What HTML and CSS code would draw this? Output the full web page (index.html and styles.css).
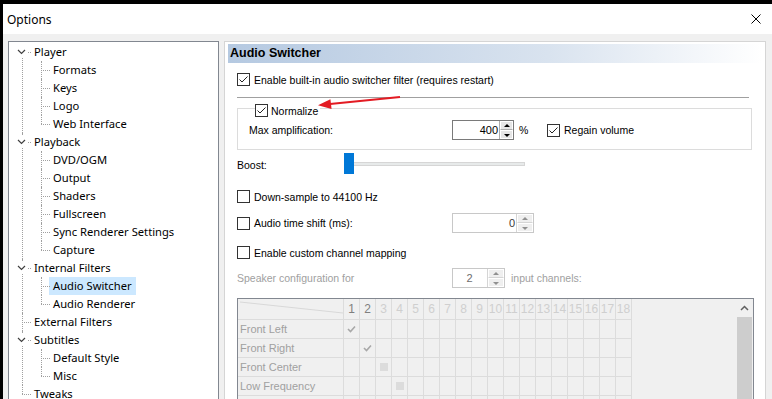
FILE: index.html
```html
<!DOCTYPE html>
<html>

<head>
  <meta charset="UTF-8">
  <title>Options</title>
  <link rel="stylesheet" href="styles.css">
</head>

<body>
  <div class="window">
    <div class="titlebar">
      <span class="title">Options</span>
      <svg class="close" width="10" height="10" viewBox="0 0 10 10"><path d="M0.5 0.5L9.5 9.5M9.5 0.5L0.5 9.5" stroke="#000" stroke-width="1" fill="none"/></svg>
    </div>

    <div class="content">
      <!-- left: page tree -->
      <ul class="tree">
        <li>
          <div class="row"><span class="exp"><svg width="9" height="6" viewBox="0 0 9 6"><path d="M1 1L4.5 4.5L8 1" stroke="#404040" stroke-width="1.2" fill="none"/></svg></span><span class="label">Player</span></div>
          <ul>
            <li><div class="row"><span class="label">Formats</span></div></li>
            <li><div class="row"><span class="label">Keys</span></div></li>
            <li><div class="row"><span class="label">Logo</span></div></li>
            <li><div class="row"><span class="label">Web Interface</span></div></li>
          </ul>
        </li>
        <li>
          <div class="row"><span class="exp"><svg width="9" height="6" viewBox="0 0 9 6"><path d="M1 1L4.5 4.5L8 1" stroke="#404040" stroke-width="1.2" fill="none"/></svg></span><span class="label">Playback</span></div>
          <ul>
            <li><div class="row"><span class="label">DVD/OGM</span></div></li>
            <li><div class="row"><span class="label">Output</span></div></li>
            <li><div class="row"><span class="label">Shaders</span></div></li>
            <li><div class="row"><span class="label">Fullscreen</span></div></li>
            <li><div class="row"><span class="label">Sync Renderer Settings</span></div></li>
            <li><div class="row"><span class="label">Capture</span></div></li>
          </ul>
        </li>
        <li>
          <div class="row"><span class="exp"><svg width="9" height="6" viewBox="0 0 9 6"><path d="M1 1L4.5 4.5L8 1" stroke="#404040" stroke-width="1.2" fill="none"/></svg></span><span class="label">Internal Filters</span></div>
          <ul>
            <li><div class="row"><span class="label selected">Audio Switcher</span></div></li>
            <li><div class="row"><span class="label">Audio Renderer</span></div></li>
          </ul>
        </li>
        <li>
          <div class="row"><span class="label">External Filters</span></div>
        </li>
        <li>
          <div class="row"><span class="exp"><svg width="9" height="6" viewBox="0 0 9 6"><path d="M1 1L4.5 4.5L8 1" stroke="#404040" stroke-width="1.2" fill="none"/></svg></span><span class="label">Subtitles</span></div>
          <ul>
            <li><div class="row"><span class="label">Default Style</span></div></li>
            <li><div class="row"><span class="label">Misc</span></div></li>
          </ul>
        </li>
        <li>
          <div class="row"><span class="label">Tweaks</span></div>
        </li>
      </ul>

      <!-- right: page -->
      <div class="page">
        <div class="page-header">Audio Switcher</div>
        <div class="page-body">
          <label class="check row-enable"><span class="box"><svg width="11" height="11" viewBox="0 0 11 11"><path d="M1.5 5.5L4 8L9.5 2.5" stroke="#222" stroke-width="1" fill="none"/></svg></span>Enable built-in audio switcher filter (requires restart)</label>

          <div class="separator"></div>

          <div class="group">
            <label class="check legend"><span class="box"><svg width="11" height="11" viewBox="0 0 11 11"><path d="M1.5 5.5L4 8L9.5 2.5" stroke="#222" stroke-width="1" fill="none"/></svg></span>Normalize</label>
            <div class="amp-row">
              <span class="amp-label">Max amplification:</span>
              <div class="spin spin-amp">
                <span class="val">400</span>
                <span class="btns"><span class="btn up"></span><span class="btn dn"></span></span>
              </div>
              <span class="pct">%</span>
              <label class="check"><span class="box"><svg width="11" height="11" viewBox="0 0 11 11"><path d="M1.5 5.5L4 8L9.5 2.5" stroke="#222" stroke-width="1" fill="none"/></svg></span>Regain volume</label>
            </div>
          </div>

          <div class="boost-row">
            <span class="boost-label">Boost:</span>
            <div class="slider">
              <div class="track"></div>
              <div class="thumb"></div>
            </div>
          </div>

          <label class="check row-down"><span class="box"></span>Down-sample to 44100 Hz</label>

          <div class="shift-row">
            <label class="check wide"><span class="box"></span>Audio time shift (ms):</label>
            <div class="spin spin-shift spin-off">
              <span class="val">0</span>
              <span class="btns"><span class="btn up"></span><span class="btn dn"></span></span>
            </div>
          </div>

          <label class="check row-map"><span class="box"></span>Enable custom channel mapping</label>

          <div class="speaker-row">
            <span class="muted wide">Speaker configuration for</span>
            <div class="spin spin-chan spin-off">
              <span class="val">2</span>
              <span class="btns"><span class="btn up"></span><span class="btn dn"></span></span>
            </div>
            <span class="muted channels">input channels:</span>
          </div>

          <div class="grid-box">
            <div class="matrix">
              <table>
                <tr class="head">
                  <th class="corner"><svg width="105" height="20" viewBox="0 0 105 20"><path d="M2 3L105 14" stroke="#d8d8d8" stroke-width="1" fill="none"/></svg></th>
                  <th class="on">1</th><th class="on">2</th><th>3</th><th>4</th><th>5</th><th>6</th><th>7</th><th>8</th><th>9</th><th>10</th><th>11</th><th>12</th><th>13</th><th>14</th><th>15</th><th>16</th><th>17</th><th>18</th>
                </tr>
                <tr>
                  <td class="name">Front Left</td>
                  <td><svg class="tick" width="9" height="8" viewBox="0 0 9 8"><path d="M1 4L3.5 6.5L8 1.5" stroke="#a8a8a8" stroke-width="1.6" fill="none"/></svg></td><td></td><td></td><td></td><td></td><td></td><td></td><td></td><td></td><td></td><td></td><td></td><td></td><td></td><td></td><td></td><td></td><td></td>
                </tr>
                <tr>
                  <td class="name">Front Right</td>
                  <td></td><td><svg class="tick" width="9" height="8" viewBox="0 0 9 8"><path d="M1 4L3.5 6.5L8 1.5" stroke="#a8a8a8" stroke-width="1.6" fill="none"/></svg></td><td></td><td></td><td></td><td></td><td></td><td></td><td></td><td></td><td></td><td></td><td></td><td></td><td></td><td></td><td></td><td></td>
                </tr>
                <tr>
                  <td class="name">Front Center</td>
                  <td></td><td></td><td><span class="square"></span></td><td></td><td></td><td></td><td></td><td></td><td></td><td></td><td></td><td></td><td></td><td></td><td></td><td></td><td></td><td></td>
                </tr>
                <tr>
                  <td class="name">Low Frequency</td>
                  <td></td><td></td><td></td><td><span class="square"></span></td><td></td><td></td><td></td><td></td><td></td><td></td><td></td><td></td><td></td><td></td><td></td><td></td><td></td><td></td>
                </tr>
                <tr>
                  <td class="name"></td>
                  <td></td><td></td><td></td><td></td><td></td><td></td><td></td><td></td><td></td><td></td><td></td><td></td><td></td><td></td><td></td><td></td><td></td><td></td>
                </tr>
              </table>
            </div>
            <div class="vscroll">
              <div class="arrow-up"><svg width="9" height="6" viewBox="0 0 9 6"><path d="M1 5L4.5 1.5L8 5" stroke="#606060" stroke-width="1.5" fill="none"/></svg></div>
              <div class="scroll-thumb"></div>
            </div>
          </div>
        </div>

        <!-- red annotation arrow -->
        <svg class="note-arrow" width="200" height="80" viewBox="0 0 200 80">
          <path d="M175 55L105 62" stroke="#e31b23" stroke-width="2.2" fill="none"/>
          <path d="M93 63.2L106.6 67L105.4 57.2Z" fill="#e31b23"/>
        </svg>
      </div>
    </div>
  </div>
</body>

</html>
```

FILE: styles.css
```css
html,
body {
  margin: 0;
  background: #000;
}

.window {
  margin: 4px 0 0 3px;
  height: 395px;
  overflow: hidden;
  background: #f0f0f0;
  font-family: "Liberation Sans", Arial, sans-serif;
  font-size: 10.5px;
  color: #000;
}

.titlebar {
  height: 30px;
  background: #fff;
  display: flex;
  align-items: center;
  justify-content: space-between;
  padding: 0 11px 0 4px;
}

.title {
  font-family: "Noto Sans", sans-serif;
  font-size: 12px;
}

.content {
  display: flex;
  gap: 5px;
  padding: 7px 6px 0 5px;
}

/* tree */

.tree,
.tree ul {
  list-style: none;
  margin: 0;
  padding: 0;
}

.tree {
  width: 209px;
  height: 370px;
  flex: none;
  background: #fff;
  border: 1px solid #828790;
  padding-top: 1px;
  font-family: "Noto Sans", sans-serif;
  font-size: 11.2px;
}

.tree li {
  position: relative;
}

.tree li::before {
  content: "";
  position: absolute;
  top: 0;
  bottom: 0;
  border-left: 1px dotted #a0a0a0;
}

.tree > li::before {
  left: 13px;
}

.tree ul li::before {
  left: 32px;
}

.tree > li:first-child::before {
  top: 9px;
}

.tree li:last-child::before {
  bottom: auto;
  height: 9px;
}

.row {
  position: relative;
  height: 18px;
  display: flex;
  align-items: center;
}

.row::before {
  content: "";
  position: absolute;
  top: 9px;
  width: 9px;
  border-top: 1px dotted #a0a0a0;
}

.tree > li > .row::before {
  left: 13px;
}

.tree ul .row::before {
  left: 32px;
}

.exp {
  position: absolute;
  left: 7px;
  top: 3px;
  width: 11px;
  height: 12px;
  background: #fff;
  display: flex;
  align-items: center;
  justify-content: center;
}

.label {
  height: 18px;
  line-height: 18px;
  padding: 0 4px;
  margin-left: 21px;
  white-space: nowrap;
}

.tree ul .label {
  margin-left: 40px;
}

.label.selected {
  background: #cce8ff;
}

/* page */

.page {
  position: relative;
  flex: 1;
  height: 370px;
  background: #fff;
  border: 1px solid #d5d5d5;
  padding: 2px 3px 0 3px;
}

.page-header {
  height: 19px;
  line-height: 19px;
  padding-left: 2px;
  font-weight: bold;
  font-size: 12.5px;
  background: linear-gradient(to right, #b5c9e1, #d9e3ef 60%, #fff);
}

.page-body {
  padding: 0 8px 0 9px;
}

.check {
  display: flex;
  align-items: center;
  height: 13px;
  white-space: nowrap;
}

.box {
  width: 11px;
  height: 11px;
  border: 1px solid #333;
  background: #fff;
  margin-right: 4px;
  flex: none;
}

.box svg {
  display: block;
}

.row-enable {
  margin-top: 10px;
}

.separator {
  margin: 11px 5px 0 0;
  height: 1px;
  background: #a0a0a0;
}

.group {
  position: relative;
  margin: 10px 2px 0 0;
  height: 40px;
  border: 1px solid #dcdcdc;
}

.legend {
  position: absolute;
  left: 17px;
  top: -5px;
  background: #fff;
  padding-right: 2px;
}

.legend .box {
  margin-right: 3px;
}

.amp-row {
  display: flex;
  align-items: center;
  height: 20px;
  margin-top: 11px;
  padding-left: 11px;
}

.amp-label {
  width: 203px;
}

.pct {
  width: 28px;
  margin-left: 5px;
}

/* spin edits */

.spin {
  display: flex;
  height: 18px;
  border: 1px solid #7a7a7a;
  background: #fff;
  flex: none;
}

.val {
  flex: 1;
  text-align: right;
  line-height: 18px;
  padding-right: 1px;
  font-size: 11px;
}

.btns {
  display: flex;
  flex-direction: column;
  width: 13px;
  border-left: 1px solid #adadad;
}

.btn {
  flex: 1;
  position: relative;
  background: #e6e6e6;
  border: 1px solid #fff;
}

.btn.up {
  border-bottom-color: #adadad;
}

.btn::after {
  content: "";
  position: absolute;
  left: 50%;
  top: 50%;
  margin: -2px 0 0 -3px;
  border-left: 3px solid transparent;
  border-right: 3px solid transparent;
}

.btn.up::after {
  border-bottom: 3px solid #000;
}

.btn.dn::after {
  border-top: 3px solid #000;
  margin-top: -1px;
}

.spin-amp {
  width: 60px;
}

.spin-shift {
  width: 80px;
}

.spin-chan {
  width: 51px;
}

.spin-chan .val {
  text-align: center;
}

.spin-off {
  border-color: #c8c8c8;
}

.spin-off .val {
  color: #6d6d6d;
}

.spin-shift .val {
  color: #3a3a3a;
}

.spin-off .btns {
  width: 16px;
  border-left-color: #d5d5d5;
}

.spin-off .btn {
  background: #efefef;
}

.spin-off .btn.up {
  border-bottom-color: #d5d5d5;
}

.spin-off .btn.up::after {
  border-bottom-color: #909090;
}

.spin-off .btn.dn::after {
  border-top-color: #909090;
}

/* slider */

.boost-row {
  display: flex;
  align-items: center;
  height: 21px;
  margin-top: 3px;
}

.boost-label {
  width: 107px;
  padding-top: 3px;
}

.slider {
  position: relative;
  width: 181px;
  height: 21px;
}

.track {
  margin-top: 9px;
  height: 2px;
  background: #e7eaea;
  border: 1px solid #d6d6d6;
}

.thumb {
  position: absolute;
  left: 0;
  top: 0;
  width: 10px;
  height: 21px;
  background: #0078d7;
}

.row-down {
  margin-top: 16px;
}

.shift-row,
.speaker-row {
  display: flex;
  align-items: center;
  height: 20px;
}

.shift-row {
  margin-top: 10px;
}

.wide {
  width: 215px;
  flex: none;
}

.row-map {
  margin-top: 13px;
}

.speaker-row {
  margin-top: 9px;
}

.muted {
  color: #a0a0a0;
}

.channels {
  margin-left: 6px;
}

/* channel matrix */

.grid-box {
  display: flex;
  margin-top: 10px;
  height: 120px;
  border: 1px solid #828790;
  background: #f0f0f0;
}

.matrix {
  flex: 1;
  overflow: hidden;
}

table {
  table-layout: fixed;
  border-collapse: separate;
  border-spacing: 0;
  width: 394px;
}

th,
td {
  width: 15px;
  height: 18px;
  padding: 0;
  border-right: 1px solid #dcdcdc;
  border-bottom: 1px solid #dcdcdc;
  text-align: center;
  font-weight: normal;
  color: #cfcfcf;
  font-size: 12px;
  line-height: 12px;
}

.head th {
  height: 20px;
}

th.on {
  color: #7f7f7f;
}

th.corner,
td.name {
  width: 105px;
}

th.corner svg {
  display: block;
}

td.name {
  text-align: left;
  padding-left: 2px;
  width: 103px;
  color: #a0a0a0;
  font-size: 11px;
  white-space: nowrap;
}

.tick {
  display: block;
  margin: 0 auto;
}

.square {
  display: block;
  width: 8px;
  height: 8px;
  margin: 0 auto;
  background: #dcdcdc;
}

.vscroll {
  width: 17px;
  flex: none;
}

.arrow-up {
  height: 18px;
  display: flex;
  align-items: center;
  justify-content: center;
}

.scroll-thumb {
  margin: 0 1px;
  height: 100px;
  background: #cdcdcd;
}

.note-arrow {
  position: absolute;
  left: 0;
  top: 0;
}
```
